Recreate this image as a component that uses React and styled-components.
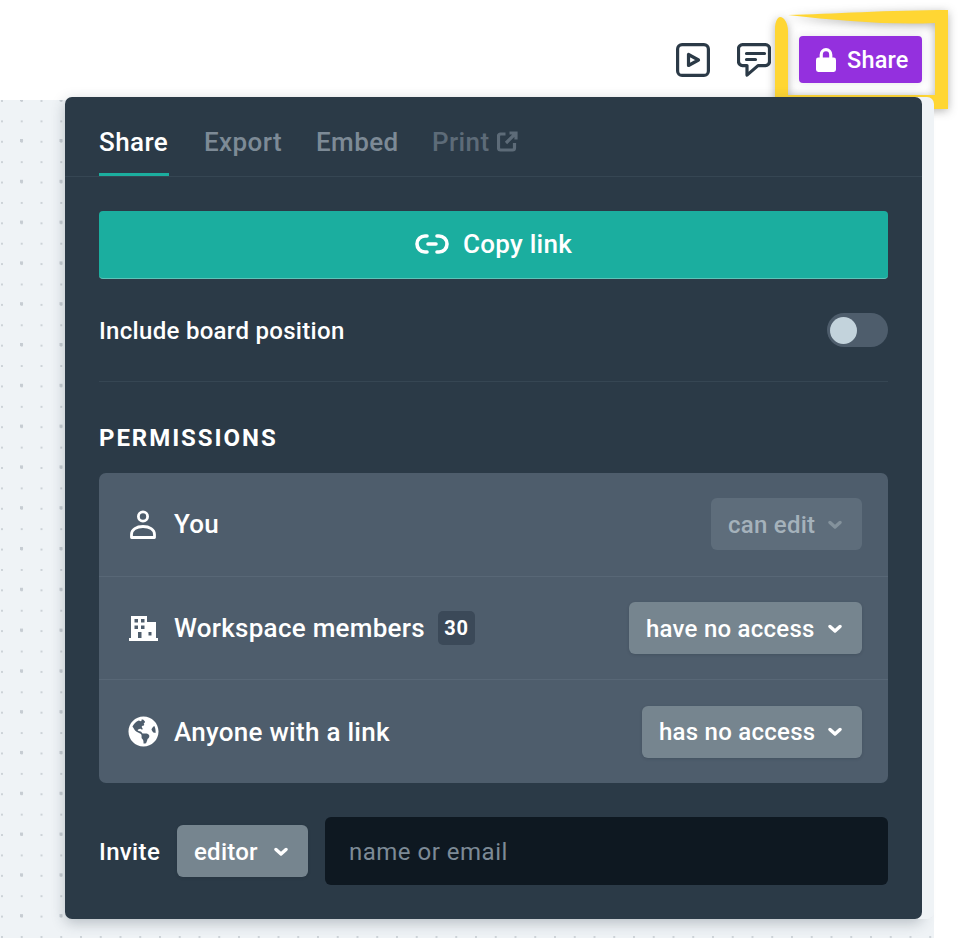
import styled, { createGlobalStyle } from "styled-components";
import { FaGlobeAmericas } from "react-icons/fa";

const GlobalStyle = createGlobalStyle`
  html, body { margin: 0; padding: 0; background: #fff; }
  body { font-family: Roboto, "Noto Sans", sans-serif; width: 962px; height: 940px; overflow: hidden; }
  * { box-sizing: border-box; }
`;

const Page = styled.div`
  width: 962px;
  height: 940px;
  position: relative;
  overflow: hidden;
`;

const Header = styled.header`
  height: 100px;
  display: flex;
  justify-content: flex-end;
  align-items: flex-start;
  padding: 36px 40px 0 0;
  background: #fff;
`;

const IconButton = styled.div`
  width: 34px;
  height: 34px;
  margin: 7px ${(p) => p.$gap}px 0 0;
  color: #2b3a47;
  svg { display: block; }
`;

const ShareButton = styled.div`
  width: 123px;
  height: 47px;
  padding-left: 17px;
  background: #9430de;
  border-radius: 4px;
  color: #fff;
  display: flex;
  align-items: center;
  gap: 11px;
  font-size: 23.5px;
  font-weight: 500;
  letter-spacing: 0.2px;
  box-shadow: 0 0 9px rgba(30, 40, 50, 0.12);
`;

const Highlight = styled.svg`
  position: absolute;
  left: 770px;
  top: 5px;
  filter: drop-shadow(0 2px 5px rgba(40, 40, 40, 0.35));
`;

const Board = styled.main`
  width: 934px;
  height: 838px;
  padding-left: 65px;
  background-color: #eff3f6;
  background-image:
    radial-gradient(circle at 1.5px 1.5px, #c6ccd2 1.5px, transparent 2px),
    radial-gradient(circle at 1px 1px, #ccd2d7 0.8px, transparent 1.2px);
  background-size: 39.5px 40.8px, 19.75px 20.4px;
  background-position: 20px 39px, 1px 0;
`;

const Panel = styled.section`
  width: 857px;
  height: 822px;
  position: relative;
  top: -3px;
  background: #2b3a47;
  border-radius: 7px;
  box-shadow: 12px 0 0 #eff3f6, 0 4px 14px rgba(40, 55, 70, 0.28);
  color: #fff;
`;

const Tabs = styled.nav`
  height: 80px;
  padding: 0 34px;
  display: flex;
  gap: 35px;
  border-bottom: 1px solid #364653;
`;

const Tab = styled.div`
  width: ${(p) => p.$width}px;
  height: 79px;
  padding-top: 29px;
  display: flex;
  gap: 7px;
  font-size: 26px;
  line-height: 32px;
  font-weight: 500;
  letter-spacing: 0.4px;
  white-space: nowrap;
  color: ${(p) => (p.$active ? "#fff" : p.$dim ? "#5d6b78" : "#7d8a96")};
  border-bottom: ${(p) => (p.$active ? "3px solid #1bae9f" : "none")};
  svg { margin-top: 5px; }
`;

const Content = styled.div`
  padding: 34px 34px 0;
`;

const CopyButton = styled.div`
  height: 68px;
  padding-bottom: 2px;
  background: #1bae9f;
  border-bottom: 1px solid #5cc4b8;
  border-radius: 4px;
  display: flex;
  align-items: center;
  justify-content: center;
  gap: 14px;
  font-size: 26px;
  font-weight: 500;
  letter-spacing: 0.25px;
`;

const OptionRow = styled.div`
  height: 103px;
  display: flex;
  align-items: center;
  justify-content: space-between;
  border-bottom: 1px solid #364653;
  font-size: 24px;
  font-weight: 500;
  letter-spacing: 0.3px;
`;

const OptionLabel = styled.span`
  margin-top: 2px;
`;

const Toggle = styled.div`
  width: 61px;
  height: 34px;
  border-radius: 17px;
  background: #4e5d6c;
  padding: 4px 3px;
`;

const Knob = styled.div`
  width: 27px;
  height: 27px;
  border-radius: 50%;
  background: #c3d3dc;
`;

const SectionTitle = styled.h2`
  margin: 41px 0 20px;
  font-size: 24px;
  line-height: 30px;
  font-weight: 700;
  letter-spacing: 1.95px;
`;

const PermissionCard = styled.div`
  height: 310px;
  background: #4e5d6c;
  border-radius: 7px;
  display: flex;
  flex-direction: column;
`;

const PermissionRow = styled.div`
  flex: 1;
  padding: 0 26px 0 28px;
  display: flex;
  align-items: center;
  justify-content: space-between;
  & + & { border-top: 1px solid #586776; }
`;

const PermissionLabel = styled.div`
  display: flex;
  align-items: center;
  font-size: 26px;
  font-weight: 500;
  letter-spacing: 0.27px;
`;

const IconSlot = styled.span`
  width: 32px;
  margin-right: 15px;
  display: flex;
  justify-content: center;
  color: #fff;
`;

const Count = styled.span`
  margin-left: 13px;
  width: 37px;
  height: 34px;
  border-radius: 5px;
  background: #3b4958;
  display: flex;
  align-items: center;
  justify-content: center;
  font-size: 20px;
  font-weight: 700;
  letter-spacing: 0.8px;
`;

const Dropdown = styled.div`
  width: ${(p) => p.$width}px;
  height: 52px;
  border-radius: 6px;
  background: ${(p) => (p.$disabled ? "#5e6d7b" : "#76858f")};
  color: ${(p) => (p.$disabled ? "#a5b2bb" : "#fff")};
  box-shadow: ${(p) => (p.$disabled ? "none" : "0 1px 3px rgba(30, 40, 50, 0.2)")};
  padding: 1px 20px 0 17px;
  display: flex;
  align-items: center;
  justify-content: space-between;
  font-size: 24px;
  font-weight: 500;
  letter-spacing: 0.25px;
  svg { color: ${(p) => (p.$disabled ? "#84929c" : "#fff")}; }
`;

const InviteRow = styled.div`
  margin-top: 34px;
  display: flex;
  align-items: center;
  font-size: 24px;
  font-weight: 500;
  letter-spacing: 0.35px;
`;

const InviteLabel = styled.span`
  width: 78px;
  margin-top: 2px;
`;

const EmailInput = styled.div`
  margin-left: 17px;
  flex: 1;
  height: 68px;
  border-radius: 6px;
  background: #0e1821;
  color: #7d8a96;
  display: flex;
  align-items: center;
  padding: 2px 0 0 24px;
  font-weight: 400;
  letter-spacing: 0.5px;
`;

const Chevron = () => (
  <svg width="14" height="10" viewBox="0 0 14 10" fill="none" stroke="currentColor" strokeWidth="3.4" strokeLinecap="round" strokeLinejoin="round">
    <path d="M2 2.5l5 4.5 5-4.5" />
  </svg>
);

const PlayIcon = () => (
  <svg width="34" height="34" viewBox="0 0 34 34" fill="none" stroke="currentColor" strokeWidth="3.2" strokeLinejoin="round">
    <rect x="1.6" y="1.6" width="30.8" height="30.8" rx="4.5" />
    <path d="M12.5 11.500v11l10-5.500z" />
  </svg>
);

const CommentIcon = () => (
  <svg width="34" height="34" viewBox="0 0 34 34" fill="none" stroke="currentColor" strokeWidth="3.2" strokeLinejoin="round" strokeLinecap="round">
    <path d="M5.500 1.600h23a4 4 0 0 1 4 4v13a4 4 0 0 1-4 4H21l-11 9.500v-9.500H5.500a4 4 0 0 1-4-4v-13a4 4 0 0 1 4-4z" />
    <path d="M9.500 10.500h18M9.500 16.500h9" />
  </svg>
);

const LockIcon = () => (
  <svg width="20" height="24" viewBox="0 0 22 25" fill="#fff" preserveAspectRatio="none">
    <path d="M4 10V7a7 7 0 0 1 14 0v3h1.500A2.500 2.500 0 0 1 22 12.500v10a2.500 2.500 0 0 1-2.500 2.500h-17A2.500 2.500 0 0 1 0 22.500v-10A2.500 2.500 0 0 1 2.500 10zm3.500 0h7V7a3.500 3.500 0 0 0-7 0z" />
  </svg>
);

const ExternalIcon = () => (
  <svg width="21" height="21" viewBox="0 0 21 21" fill="none" stroke="#5d6b78" strokeWidth="3.2">
    <path d="M8.500 3H3.500A2 2 0 0 0 1.500 5v12a2 2 0 0 0 2 2h12a2 2 0 0 0 2-2v-5" />
    <path d="M12.500 2h6.500v6.500M18.500 2.500l-9.500 9.500" />
  </svg>
);

const LinkIcon = () => (
  <svg width="34" height="20" viewBox="0 0 34 20" fill="none" stroke="#fff" strokeWidth="3.600" strokeLinecap="round">
    <path d="M12 2H10a8 8 0 0 0 0 16h2M22 2h2a8 8 0 0 1 0 16h-2M13 10h8" />
  </svg>
);

const PersonIcon = () => (
  <svg width="26" height="29" viewBox="0 0 26 29" fill="none" stroke="#fff" strokeWidth="2.800" strokeLinejoin="round">
    <circle cx="13" cy="6.500" r="4.600" />
    <path d="M1.500 27.500v-3c0-5 5-8 11.500-8s11.500 3 11.500 8v3z" />
  </svg>
);

const BuildingIcon = () => (
  <svg width="29" height="25" viewBox="0 0 29 25" fill="#fff" fillRule="evenodd">
    <path d="M2 0h16v6h9v16h2v3H0v-3h2zM5.500 3v3.500h3.500V3zm6.500 0v3.500h3.500V3zM5.500 9.500V13h3.500V9.500zm6.500 0V13h3.500V9.500zm7.500 6.500v3.500h3V16zM9 16v6h3.500v-6z" />
  </svg>
);

const App = () => (
  <Page>
    <GlobalStyle />
    <Header>
      <IconButton $gap={27}><PlayIcon /></IconButton>
      <IconButton $gap={28}><CommentIcon /></IconButton>
      <ShareButton><LockIcon />Share</ShareButton>
    </Header>
    <Highlight width="184" height="110" viewBox="0 0 184 110">
      <path
        fill="#ffd633"
        fillRule="evenodd"
        d="M5 104 V24 C5 16 8 12 10 12 C14 12 18 18 18 26 V90 H165 V18 C120 20 70 16 18 10 C60 9 120 5 178 5 V104 Z"
      />
    </Highlight>
    <Board>
      <Panel>
        <Tabs>
          <Tab $active $width={70}>Share</Tab>
          <Tab $width={77}>Export</Tab>
          <Tab $width={81}>Embed</Tab>
          <Tab $dim>Print<ExternalIcon /></Tab>
        </Tabs>
        <Content>
          <CopyButton><LinkIcon />Copy link</CopyButton>
          <OptionRow>
            <OptionLabel>Include board position</OptionLabel>
            <Toggle><Knob /></Toggle>
          </OptionRow>
          <SectionTitle>PERMISSIONS</SectionTitle>
          <PermissionCard>
            <PermissionRow>
              <PermissionLabel><IconSlot><PersonIcon /></IconSlot>You</PermissionLabel>
              <Dropdown $width={151} $disabled>can edit<Chevron /></Dropdown>
            </PermissionRow>
            <PermissionRow>
              <PermissionLabel><IconSlot><BuildingIcon /></IconSlot>Workspace members<Count>30</Count></PermissionLabel>
              <Dropdown $width={233}>have no access<Chevron /></Dropdown>
            </PermissionRow>
            <PermissionRow>
              <PermissionLabel><IconSlot><FaGlobeAmericas size={31} /></IconSlot>Anyone with a link</PermissionLabel>
              <Dropdown $width={220}>has no access<Chevron /></Dropdown>
            </PermissionRow>
          </PermissionCard>
          <InviteRow>
            <InviteLabel>Invite</InviteLabel>
            <Dropdown $width={131}>editor<Chevron /></Dropdown>
            <EmailInput>name or email</EmailInput>
          </InviteRow>
        </Content>
      </Panel>
    </Board>
  </Page>
);

export default App;
